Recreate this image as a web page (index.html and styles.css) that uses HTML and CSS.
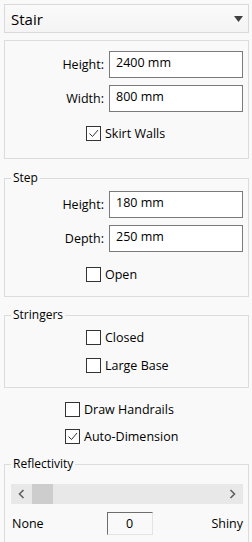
FILE: index.html
```html
<!DOCTYPE html>
<html>
<head>
<meta charset="utf-8">
<link rel="stylesheet" href="styles.css">
</head>
<body>
<div class="panel">
  <div class="select">
    <span class="select-text">Stair</span>
    <svg class="select-arrow" width="9" height="6" viewBox="0 0 9 6"><path d="M0 0H9L4.5 6Z" fill="#404040"/></svg>
  </div>

  <fieldset class="group group-main">
    <div class="rows">
      <label class="row"><span class="lbl">Height:</span><span class="input">2400 mm</span></label>
      <label class="row"><span class="lbl">Width:</span><span class="input">800 mm</span></label>
    </div>
    <div class="check check-in check-main"><span class="box checked"><svg width="13" height="13" viewBox="0 0 13 13"><path d="M2.5 6.5L5.5 9.5L11 3" fill="none" stroke="#333" stroke-width="1"/></svg></span><span>Skirt Walls</span></div>
  </fieldset>

  <fieldset class="group group-step">
    <legend>Step</legend>
    <div class="rows">
      <label class="row"><span class="lbl">Height:</span><span class="input">180 mm</span></label>
      <label class="row"><span class="lbl">Depth:</span><span class="input">250 mm</span></label>
    </div>
    <div class="check check-in check-open"><span class="box"></span><span>Open</span></div>
  </fieldset>

  <fieldset class="group group-str">
    <legend>Stringers</legend>
    <div class="checklist">
      <div class="check check-in"><span class="box"></span><span>Closed</span></div>
      <div class="check check-in"><span class="box"></span><span>Large Base</span></div>
    </div>
  </fieldset>

  <div class="standalone">
    <div class="check check-out"><span class="box"></span><span>Draw Handrails</span></div>
    <div class="check check-out"><span class="box checked"><svg width="13" height="13" viewBox="0 0 13 13"><path d="M2.5 6.5L5.5 9.5L11 3" fill="none" stroke="#333" stroke-width="1"/></svg></span><span>Auto-Dimension</span></div>
  </div>

  <fieldset class="group group-refl">
    <legend>Reflectivity</legend>
    <div class="scrollbar">
      <span class="sb-btn"><svg width="7" height="10" viewBox="0 0 7 10"><path d="M5.5 1L1.5 5L5.5 9" fill="none" stroke="#606060" stroke-width="1.6"/></svg></span>
      <span class="sb-thumb"></span>
      <span class="sb-track"></span>
      <span class="sb-btn"><svg width="7" height="10" viewBox="0 0 7 10"><path d="M1.5 1L5.5 5L1.5 9" fill="none" stroke="#606060" stroke-width="1.6"/></svg></span>
    </div>
    <div class="range">
      <span>None</span>
      <span class="value">0</span>
      <span>Shiny</span>
    </div>
  </fieldset>
</div>
</body>
</html>
```

FILE: styles.css
```css
html, body {
  margin: 0;
  padding: 0;
  background: #f9f9f9;
}
body {
  width: 252px;
  height: 542px;
  overflow: hidden;
  font-family: "Open Sans", "Noto Sans", sans-serif;
  font-size: 12px;
  color: #000;
}
.panel {
  padding: 4px 3px 0 4px;
  display: flex;
  flex-direction: column;
}
.select {
  height: 27px;
  border: 1px solid #d9d9d9;
  background: linear-gradient(#fafafa, #f4f4f4);
  display: flex;
  align-items: center;
  justify-content: space-between;
  padding: 0 5px 0 6px;
}
.select-text {
  font-size: 15px;
  line-height: 18px;
}
.select-arrow {
  margin-top: 1px;
}
.group {
  margin: 0;
  padding: 0;
  border: 1px solid #dcdcdc;
  min-inline-size: 0;
}
.group legend {
  margin-left: 6px;
  padding: 0 2px;
  line-height: 16px;
}
.group-main {
  margin-top: 7px;
  padding: 10px 0 17px 0;
}
.group-step {
  margin-top: 11px;
  padding: 5px 0 14px 0;
}
.group-str {
  margin-top: 10px;
  padding: 7px 0 14px 0;
}
.group-refl {
  margin-top: 12px;
  padding: 12px 0 10px 0;
}
.rows {
  display: flex;
  flex-direction: column;
  gap: 7px;
}
.row {
  display: grid;
  grid-template-columns: 1fr 134px;
  column-gap: 5px;
  padding-right: 5px;
  align-items: center;
}
.lbl {
  text-align: right;
  line-height: 16px;
  font-size: 12.5px;
}
.input {
  height: 25px;
  border: 1px solid #7a7a7a;
  background: #fff;
  padding: 0 6px;
  line-height: 22px;
  font-size: 12.5px;
}
.check {
  display: flex;
  align-items: center;
  gap: 4px;
  height: 15px;
  line-height: 15px;
  font-size: 12.5px;
}
.check-in {
  margin-left: 81px;
}
.check-out {
  margin-left: 61px;
}
.check-main {
  margin-top: 14px;
}
.check-open {
  margin-top: 15px;
}
.box {
  box-sizing: border-box;
  width: 15px;
  height: 15px;
  border: 1px solid #333;
  background: #fff;
  display: flex;
  align-items: center;
  justify-content: center;
  flex: none;
}
.checklist {
  display: flex;
  flex-direction: column;
  gap: 13px;
}
.standalone {
  margin-top: 14px;
  display: flex;
  flex-direction: column;
  gap: 12px;
}
.scrollbar {
  margin: 0 5px 0 6px;
  height: 20px;
  background: #e8e8e8;
  display: flex;
  align-items: stretch;
}
.sb-btn {
  width: 21px;
  display: flex;
  align-items: center;
  justify-content: center;
  flex: none;
}
.sb-thumb {
  width: 21px;
  background: #cdcdcd;
  flex: none;
}
.sb-track {
  flex: 1;
}
.range {
  margin-top: 8px;
  padding: 0 5px 0 7px;
  display: flex;
  justify-content: space-between;
  align-items: center;
  font-size: 12.5px;
}
.value {
  box-sizing: border-box;
  width: 46px;
  height: 23px;
  border: 1px solid;
  border-color: #6d6d6d #e3e3e3 #e3e3e3 #6d6d6d;
  text-align: center;
  line-height: 21px;
  margin-left: 4px;
}
```
